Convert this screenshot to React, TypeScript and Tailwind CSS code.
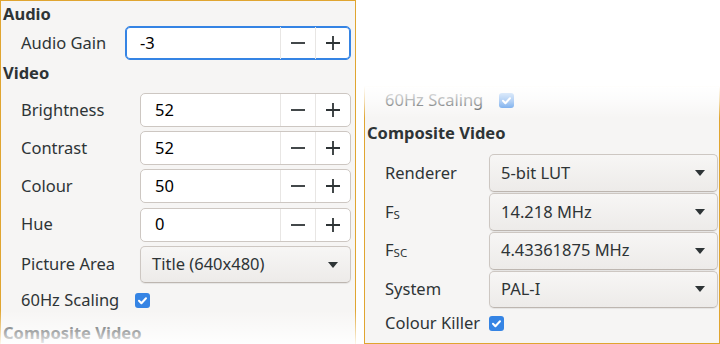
import React from 'react';

const Minus = () => (
    <svg width="16" height="16" viewBox="0 0 16 16" fill="none" stroke="#2e3436" strokeWidth="1.8">
        <path d="M1 8h14" />
    </svg>
);

const Plus = () => (
    <svg width="16" height="16" viewBox="0 0 16 16" fill="none" stroke="#2e3436" strokeWidth="1.8">
        <path d="M1 8h14M8 1v14" />
    </svg>
);

const Arrow = () => (
    <svg width="10" height="6" viewBox="0 0 10 6">
        <path d="M0 0h10L5 6z" fill="#2e3436" />
    </svg>
);

const Check = () => (
    <span className="flex h-[15px] w-[15px] items-center justify-center rounded-[3px] bg-[#3584e4]">
        <svg width="11" height="11" viewBox="0 0 11 11" fill="none" stroke="white" strokeWidth="2" strokeLinecap="round" strokeLinejoin="round">
            <path d="M2 5.8l2.4 2.4L9 3.2" />
        </svg>
    </span>
);

const Spin = ({ value, focused = false }: { value: string; focused?: boolean }) => (
    <div
        className={`flex h-[34px] items-stretch rounded-[5px] border bg-white ${
            focused ? 'border-[#3584e4] ring-1 ring-inset ring-[#3584e4]' : 'border-[#cdc7c2]'
        }`}
    >
        <span className="flex flex-1 items-center pl-[14px] text-black">{value}</span>
        <span className="flex w-[35px] items-center justify-center border-l border-[#e8e6e4]">
            <Minus />
        </span>
        <span className="flex w-[35px] items-center justify-center border-l border-[#e8e6e4]">
            <Plus />
        </span>
    </div>
);

const Combo = ({ value }: { value: string }) => (
    <div className="flex h-[37.7px] items-center justify-between rounded-[5px] border border-[#cdc7c2] border-b-[#bdb6b0] bg-linear-to-b from-[#f7f6f5] to-[#edebe9] pl-[11px] pr-[12px] text-[#2e3436] shadow-[0_1px_1px_rgba(0,0,0,0.07)]">
        <span>{value}</span>
        <Arrow />
    </div>
);

const Heading = ({ children }: { children: React.ReactNode }) => (
    <div className="h-[22px] pl-[2px] font-bold leading-[22px] text-[#2e3436]">{children}</div>
);

const Row = ({ label, col, children }: { label: React.ReactNode; col: string; children: React.ReactNode }) => (
    <div className={`grid items-center pl-[20px] ${col}`}>
        <span className="text-[#2e3436]">{label}</span>
        {children}
    </div>
);

const Sub = ({ children }: { children: React.ReactNode }) => (
    <span className="relative top-[1px] text-[11.5px]">{children}</span>
);

const Settings = ({ pad }: { pad: string }) => (
    <div className={`flex flex-col pt-[2px] ${pad}`}>
        <Heading>Audio</Heading>
        <div className="mt-[1px]">
            <Row label="Audio Gain" col="grid-cols-[104px_1fr]">
                <Spin value="-3" focused />
            </Row>
        </div>

        <div className="mt-[2px]">
            <Heading>Video</Heading>
        </div>
        <div className="mt-[9px] flex flex-col gap-[4.2px]">
            <Row label="Brightness" col="grid-cols-[119px_1fr]">
                <Spin value="52" />
            </Row>
            <Row label="Contrast" col="grid-cols-[119px_1fr]">
                <Spin value="52" />
            </Row>
            <Row label="Colour" col="grid-cols-[119px_1fr]">
                <Spin value="50" />
            </Row>
            <Row label="Hue" col="grid-cols-[119px_1fr]">
                <Spin value="0" />
            </Row>
            <Row label="Picture Area" col="grid-cols-[119px_1fr]">
                <Combo value="Title (640x480)" />
            </Row>
        </div>
        <div className="mt-[6px] flex h-[22px] items-center pl-[20px]">
            <span className="w-[114px] text-[#2e3436]">60Hz Scaling</span>
            <Check />
        </div>

        <div className="mt-[11px]">
            <Heading>Composite Video</Heading>
        </div>
        <div className="mt-[10px] flex flex-col gap-[1px]">
            <Row label="Renderer" col="grid-cols-[104px_1fr]">
                <Combo value="5-bit LUT" />
            </Row>
            <Row label={<>F<Sub>S</Sub></>} col="grid-cols-[104px_1fr]">
                <Combo value="14.218 MHz" />
            </Row>
            <Row label={<>F<Sub>SC</Sub></>} col="grid-cols-[104px_1fr]">
                <Combo value="4.43361875 MHz" />
            </Row>
            <Row label="System" col="grid-cols-[104px_1fr]">
                <Combo value="PAL-I" />
            </Row>
        </div>
        <div className="mt-[4px] flex h-[22px] items-center pl-[20px]">
            <span className="w-[104px] text-[#2e3436]">Colour Killer</span>
            <Check />
        </div>
        <div className="h-[20px]" />
    </div>
);

export default function App() {
    return (
        <div className="flex h-[344px] w-[720px] gap-[8px] overflow-hidden bg-white font-['Noto_Sans',sans-serif] text-[16.5px]">
            {/* scrolled to top, undershoot fade at the bottom */}
            <div className="relative h-[344px] w-[356px] shrink-0">
                <div className="h-full overflow-hidden border-x border-t border-[#e0a530] bg-[#f6f5f4]">
                    <Settings pad="pr-[4px]" />
                </div>
                <div className="pointer-events-none absolute inset-x-0 bottom-0 h-[34px] bg-linear-to-b from-white/0 to-white/90" />
            </div>

            {/* scrolled down, undershoot fade at the top */}
            <div className="relative mt-[86px] h-[258px] w-[356px] shrink-0">
                <div className="h-full overflow-hidden border border-[#e0a530] bg-[#f6f5f4]">
                    <div className="-mt-[286px]">
                        <Settings pad="pr-[1px]" />
                    </div>
                </div>
                <div className="pointer-events-none absolute inset-x-0 top-0 h-[32px] bg-linear-to-b from-white via-white/60 to-white/0" />
            </div>
        </div>
    );
}
